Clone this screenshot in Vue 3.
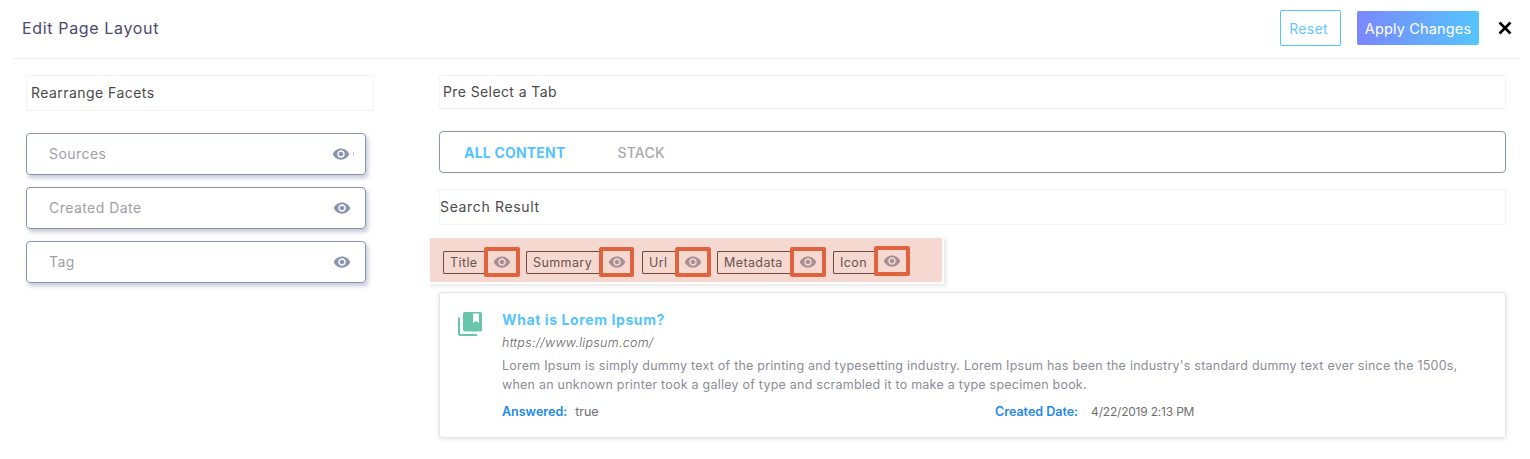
<script setup>
const facets = ['Sources', 'Created Date', 'Tag']
const tags = [
  { name: 'Title', width: 41 },
  { name: 'Summary', width: 73 },
  { name: 'Url', width: 33 },
  { name: 'Metadata', width: 73 },
  { name: 'Icon', width: 41 },
]
</script>

<template>
  <div class="page">
    <header class="head">
      <span class="head-title">Edit Page Layout</span>
      <div class="actions">
        <button class="reset">Reset</button>
        <button class="apply">Apply Changes</button>
        <svg class="close" width="14" height="14" viewBox="0 0 14 14"><path d="M1.500 1.500 12.500 12.500M12.500 1.500 1.500 12.500" stroke="#000" stroke-width="2.600" fill="none"/></svg>
      </div>
    </header>
    <main class="cols">
      <section class="left">
        <div class="label left-label">Rearrange Facets</div>
        <div class="facets">
          <div v-for="f in facets" :key="f" class="facet">
            <span>{{ f }}</span>
            <svg class="eye" viewBox="0 0 24 24"><path d="M12 4.500C7 4.500 2.730 7.610 1 12c1.730 4.390 6 7.500 11 7.500s9.270-3.110 11-7.500c-1.730-4.390-6-7.500-11-7.500zM12 17c-2.760 0-5-2.240-5-5s2.240-5 5-5 5 2.240 5 5-2.240 5-5 5zm0-8c-1.660 0-3 1.340-3 3s1.340 3 3 3 3-1.340 3-3-1.340-3-3-3z"/></svg>
          </div>
        </div>
      </section>
      <section class="right">
        <div class="label tab-label">Pre Select a Tab</div>
        <div class="tabs">
          <span class="tab active">ALL CONTENT</span>
          <span class="tab">STACK</span>
        </div>
        <div class="label result-label">Search Result</div>
        <div class="band">
          <div v-for="t in tags" :key="t.name" class="item">
            <span class="tag" :style="{ width: t.width + 'px' }">{{ t.name }}</span>
            <span class="mark">
              <svg class="eye small" viewBox="0 0 24 24"><path d="M12 4.500C7 4.500 2.730 7.610 1 12c1.730 4.390 6 7.500 11 7.500s9.270-3.110 11-7.500c-1.730-4.390-6-7.500-11-7.500zM12 17c-2.760 0-5-2.240-5-5s2.240-5 5-5 5 2.240 5 5-2.240 5-5 5zm0-8c-1.660 0-3 1.340-3 3s1.340 3 3 3 3-1.340 3-3-1.340-3-3-3z"/></svg>
            </span>
          </div>
        </div>
        <article class="card">
          <svg class="doc" width="26" height="26" viewBox="0 0 26 26">
            <path d="M1 6.500v16A2.500 2.500 0 0 0 3.500 25H20v-2H4a1 1 0 0 1-1-1V6.500z" fill="#66c6ac"/>
            <path d="M8 1h15.500A1.500 1.500 0 0 1 25 2.500V19a1.500 1.500 0 0 1-1.500 1.500H8A2 2 0 0 1 6 18.500V3a2 2 0 0 1 2-2zm8 1.500V12l3-2 3 2V2.500z" fill="#66c6ac" fill-rule="evenodd"/>
          </svg>
          <div class="body">
            <div class="title">What is Lorem Ipsum?</div>
            <div class="url">https://www.lipsum.com/</div>
            <p class="text">Lorem Ipsum is simply dummy text of the printing and typesetting industry. Lorem Ipsum has been the industry's standard dummy text ever since the 1500s, when an unknown printer took a galley of type and scrambled it to make a type specimen book.</p>
            <div class="meta">
              <div class="meta-col"><b>Answered:</b><span>true</span></div>
              <div class="meta-col date"><b>Created Date:</b><span>4/22/2019 2:13 PM</span></div>
            </div>
          </div>
        </article>
      </section>
    </main>
  </div>
</template>

<style>
html, body { margin: 0; background: #fff; }
</style>

<style scoped>
.page { width: 1530px; height: 459px; overflow: hidden; font-family: Inter, "Open Sans", sans-serif; color: #444; box-sizing: border-box; }
.head { margin: 0 10px 0 12px; padding: 0 8px 2px 10px; border-bottom: 1px solid #f0f0f2; display: flex; align-items: center; justify-content: space-between; height: 56px; }
.head-title { font-size: 16px; color: #4a4a68; letter-spacing: .65px; }
.actions { display: flex; align-items: center; }
.reset { width: 61px; height: 36px; box-sizing: border-box; border: 1px solid #55c4ff; border-radius: 2px; background: #fff; color: #62c8ff; font: 14px Inter, sans-serif; letter-spacing: .3px; padding: 0 4px 0 0; }
.apply { width: 122px; height: 34px; margin-left: 16px; border: 0; border-radius: 2px; background: linear-gradient(90deg, #7b87ff, #55c5ff); color: #fff; font: 14.500px Inter, sans-serif; letter-spacing: .15px; padding: 0; }
.close { margin-left: 19px; }
.cols { display: flex; padding: 16px 24px 0 26px; }
.left { width: 348px; }
.right { width: 1067px; margin-left: 65px; }
.label { box-sizing: border-box; border: 1px solid #f3f3f5; font-size: 14px; letter-spacing: .45px; color: #4a4a4a; display: flex; align-items: center; padding: 0 0 2px 4px; }
.left-label { height: 36px; }
.tab-label { height: 34px; padding-left: 3px; letter-spacing: .4px; }
.result-label { height: 36px; margin-top: 16px; padding: 0 0 1px; letter-spacing: .65px; }
.facets { width: 340px; margin-top: 22px; display: flex; flex-direction: column; gap: 12px; }
.facet { position: relative; height: 42px; box-sizing: border-box; border: 1px solid #8a94b0; border-radius: 4px; box-shadow: 2px 3px 4px rgba(110,120,150,.4); display: flex; align-items: center; justify-content: space-between; padding: 0 14px 2px 22px; color: #a0a0a6; font-size: 14px; letter-spacing: .45px; }
.facet:first-child::after { content: ""; position: absolute; left: 326px; top: 18px; width: 1px; height: 4px; background: #c4c9d8; }
.facet:first-child .eye { transform: translateX(-1px); }
.eye { width: 18px; height: 18px; fill: #8a94b0; margin-top: 2px; }
.tabs { height: 42px; margin-top: 22px; box-sizing: border-box; border: 1px solid #8a94b0; border-radius: 4px; display: flex; align-items: center; padding: 0 0 0 24px; gap: 52px; font-size: 14px; letter-spacing: .2px; color: #a9a9a9; }
.tab { font-weight: 500; }
.tab.active { color: #55c4ff; font-weight: 700; }
.band { width: 512px; height: 44px; margin: 13px 0 0 -9px; box-sizing: border-box; padding: 4px 0 0 13px; background: #f5d8cf; box-shadow: 0 0 0 2px #fff, 2px 2px 4px 2px rgba(0,0,0,.1); display: flex; align-items: center; gap: 6px; }
.item { display: flex; align-items: center; }
.item:nth-child(3) { margin-left: 2px; }
.item:nth-child(5) { margin-left: 1px; }
.tag { height: 23px; box-sizing: border-box; border: 1px solid #6d4a42; border-right: 0; border-radius: 2px 0 0 2px; padding-left: 6px; display: flex; align-items: center; font-size: 12.500px; letter-spacing: .4px; color: #6a5450; }
.mark { width: 36px; height: 30px; box-sizing: border-box; border: 4px solid #e0633f; border-radius: 2px; display: flex; align-items: center; justify-content: center; }
.item:nth-child(2) .mark { width: 35px; }
.item:last-child .mark { margin-top: -2px; }
.eye.small { fill: #a88f95; width: 18px; height: 18px; margin-top: 0; }
.card { height: 146px; margin-top: 10px; box-sizing: border-box; border: 1px solid #e4e4e4; border-radius: 3px; box-shadow: 0 1px 4px rgba(0,0,0,.12); display: flex; padding: 18px 20px 0 17px; }
.doc { flex: none; margin-top: 0; }
.body { margin-left: 19px; flex: 1; }
.title { font-size: 14px; font-weight: 700; color: #55c4ff; line-height: 17px; letter-spacing: .6px; }
.url { font-size: 12.500px; font-style: italic; font-weight: 300; color: #666; margin-top: 7px; line-height: 16px; letter-spacing: .27px; }
.text { margin: 5px 0 0; max-width: 975px; font-size: 12.500px; line-height: 19px; letter-spacing: .23px; color: #8c8c96; }
.meta { display: flex; margin-top: 10px; font-size: 12.500px; }
.meta-col { width: 493px; display: flex; gap: 8px; color: #707070; }
.meta-col b { color: #2288ee; font-weight: 600; }
.date { gap: 13px; }
.date span { font-size: 12px; letter-spacing: -.2px; }
</style>
